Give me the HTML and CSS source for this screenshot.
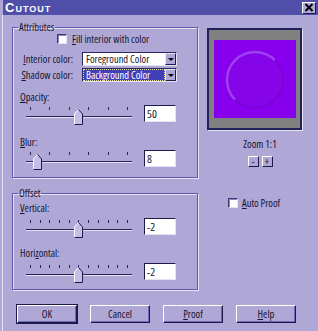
FILE: index.html
```html
<!DOCTYPE html>
<html lang="en">
<head>
    <meta charset="UTF-8">
    <title>Cutout</title>
    <link rel="stylesheet" href="styles.css">
</head>
<body>
    <div class="window">
        <div class="titlebar">
            <span class="title">Cutout</span>
            <div class="close">
                <svg width="10" height="9" viewBox="0 0 10 9"><path d="M1.5 1 L8.5 8 M8.5 1 L1.5 8" stroke="#000" stroke-width="2"/></svg>
            </div>
        </div>
        <div class="client">
            <div class="main">
                <div class="left">
                    <fieldset class="group">
                        <legend>Attributes</legend>
                        <div class="check-row fill-check">
                            <span class="checkbox"></span>
                            <span><u>F</u>ill interior with color</span>
                        </div>
                        <div class="combos">
                            <span class="combo-label"><u>I</u>nterior color:</span>
                            <div class="combo">
                                <span class="combo-text">Foreground Color</span>
                                <span class="combo-btn"><span class="arrow"></span></span>
                            </div>
                            <span class="combo-label"><u>S</u>hadow color:</span>
                            <div class="combo">
                                <span class="combo-text selected">Background Color</span>
                                <span class="combo-btn"><span class="arrow"></span></span>
                            </div>
                        </div>
                        <div class="field-label first"><u>O</u>pacity:</div>
                        <div class="slider-row">
                            <div class="slider">
                                <div class="ticks"><i></i><i></i><i></i><i></i><i></i><i></i></div>
                                <div class="track"></div>
                                <svg class="thumb" style="left: 48px" width="9" height="16" viewBox="0 0 9 16"><path d="M0.5 15.5 V5 L4.5 0.5 L8.5 5 V15.5 Z" fill="#c4bfe6"/><path d="M0.5 15.5 V5 L4.5 0.5" fill="none" stroke="#fff"/><path d="M4.5 0.5 L8.5 5 V15.5 H0.5" fill="none" stroke="#1c1a48"/></svg>
                            </div>
                            <div class="edit">50</div>
                        </div>
                        <div class="field-label"><u>B</u>lur:</div>
                        <div class="slider-row">
                            <div class="slider">
                                <div class="ticks"><i></i><i></i><i></i><i></i><i></i><i></i></div>
                                <div class="track"></div>
                                <svg class="thumb" style="left: 7px" width="9" height="16" viewBox="0 0 9 16"><path d="M0.5 15.5 V5 L4.5 0.5 L8.5 5 V15.5 Z" fill="#c4bfe6"/><path d="M0.5 15.5 V5 L4.5 0.5" fill="none" stroke="#fff"/><path d="M4.5 0.5 L8.5 5 V15.5 H0.5" fill="none" stroke="#1c1a48"/></svg>
                            </div>
                            <div class="edit">8</div>
                        </div>
                    </fieldset>
                    <fieldset class="group offset">
                        <legend>Offset</legend>
                        <div class="field-label first"><u>V</u>ertical:</div>
                        <div class="slider-row">
                            <div class="slider">
                                <div class="ticks"><i></i><i></i><i></i><i></i><i></i><i></i><i></i><i></i><i></i><i></i><i></i></div>
                                <div class="track"></div>
                                <svg class="thumb" style="left: 48px" width="9" height="16" viewBox="0 0 9 16"><path d="M0.5 15.5 V5 L4.5 0.5 L8.5 5 V15.5 Z" fill="#c4bfe6"/><path d="M0.5 15.5 V5 L4.5 0.5" fill="none" stroke="#fff"/><path d="M4.5 0.5 L8.5 5 V15.5 H0.5" fill="none" stroke="#1c1a48"/></svg>
                            </div>
                            <div class="edit">-2</div>
                        </div>
                        <div class="field-label">Hori<u>z</u>ontal:</div>
                        <div class="slider-row">
                            <div class="slider">
                                <div class="ticks"><i></i><i></i><i></i><i></i><i></i><i></i><i></i><i></i><i></i><i></i><i></i></div>
                                <div class="track"></div>
                                <svg class="thumb" style="left: 48px" width="9" height="16" viewBox="0 0 9 16"><path d="M0.5 15.5 V5 L4.5 0.5 L8.5 5 V15.5 Z" fill="#c4bfe6"/><path d="M0.5 15.5 V5 L4.5 0.5" fill="none" stroke="#fff"/><path d="M4.5 0.5 L8.5 5 V15.5 H0.5" fill="none" stroke="#1c1a48"/></svg>
                            </div>
                            <div class="edit">-2</div>
                        </div>
                    </fieldset>
                </div>
                <div class="right">
                    <div class="preview">
                        <div class="canvas">
                            <svg width="82" height="78" viewBox="0 0 82 78">
                                <circle cx="41" cy="40" r="28" fill="#8604e8"/>
                                <path d="M21.2 59.8 A28 28 0 0 1 60.8 20.2" fill="none" stroke="#9c40f0" stroke-width="2.5"/>
                                <path d="M60.8 20.2 A28 28 0 0 1 21.2 59.8" fill="none" stroke="#7c02d8" stroke-width="2"/>
                            </svg>
                        </div>
                    </div>
                    <div class="zoom-label">Zoom 1:1</div>
                    <div class="zoom-btns">
                        <span class="mini-btn">-</span>
                        <span class="mini-btn">+</span>
                    </div>
                    <div class="check-row auto-proof">
                        <span class="checkbox"></span>
                        <span><u>A</u>uto Proof</span>
                    </div>
                </div>
            </div>
            <div class="buttons">
                <span class="btn default">OK</span>
                <span class="btn">Cancel</span>
                <span class="btn"><u>P</u>roof</span>
                <span class="btn"><u>H</u>elp</span>
            </div>
        </div>
    </div>
</body>
</html>
```

FILE: styles.css
```css
* {
    box-sizing: border-box;
}
body {
    margin: 0;
    background: #afa8d7;
    font-family: "Open Sans", sans-serif;
    font-stretch: 75%;
    font-size: 10.5px;
    line-height: 12px;
    color: #16142e;
}
.window {
    width: 318px;
    height: 331px;
    padding-left: 2px;
    display: flex;
    flex-direction: column;
}
.titlebar {
    height: 15px;
    margin-left: 1px;
    background: #4f4ea8;
    display: flex;
    align-items: center;
    justify-content: space-between;
    padding: 0 2px 0 2px;
}
.title {
    font-family: "Liberation Sans", sans-serif;
    font-stretch: normal;
    font-weight: bold;
    font-size: 13px;
    font-variant: small-caps;
    letter-spacing: 1px;
    color: #fff;
}
.close {
    width: 14px;
    height: 12px;
    background: #afa8d7;
    border: 1px solid;
    border-color: #fff #1c1a48 #1c1a48 #fff;
    display: flex;
    align-items: center;
    justify-content: center;
}
.client {
    flex: 1;
    border-left: 1px solid #e6e2f6;
    display: flex;
    flex-direction: column;
}
.main {
    display: flex;
    padding: 6px 0 0 9px;
}
.left {
    width: 186px;
    display: flex;
    flex-direction: column;
    gap: 9px;
}
.group {
    margin: 0;
    padding: 0 0 6px 0;
    min-width: 0;
    border: 1px solid #5f5ab0;
    box-shadow: 1px 1px 0 #e6e2f6, inset 1px 1px 0 #e6e2f6;
}
.group legend {
    margin-left: 5px;
    padding: 0 1px;
    line-height: 12px;
}
.group.offset {
    padding-bottom: 5px;
}
.check-row {
    display: flex;
    align-items: center;
    gap: 5px;
    line-height: 12px;
}
.fill-check {
    margin-left: 44px;
}
.checkbox {
    width: 10px;
    height: 10px;
    background: #fff;
    border: 1px solid;
    border-color: #3a3870 #e6e2f6 #e6e2f6 #3a3870;
    box-shadow: inset 1px 1px 0 #8c86c4;
}
.combos {
    display: grid;
    grid-template-columns: 60px 95px;
    column-gap: 9px;
    row-gap: 2px;
    align-items: center;
    margin-top: 7px;
}
.combo-label {
    justify-self: end;
    white-space: nowrap;
}
.combo {
    height: 14px;
    display: flex;
    background: #fff;
    border: 1px solid;
    border-color: #2a2860 #e6e2f6 #e6e2f6 #2a2860;
}
.combo-text {
    flex: 1;
    line-height: 12px;
    padding-left: 3px;
    white-space: nowrap;
    overflow: hidden;
}
.combo-text.selected {
    background: #4240b8;
    color: #fff;
    outline: 1px dotted #e8e4a0;
    outline-offset: -1px;
}
.combo-btn {
    width: 11px;
    flex: none;
    background: #afa8d7;
    border: 1px solid;
    border-color: #e6e2f6 #1c1a48 #1c1a48 #e6e2f6;
    display: flex;
    align-items: center;
    justify-content: center;
}
.arrow {
    width: 0;
    height: 0;
    border-left: 3px solid transparent;
    border-right: 3px solid transparent;
    border-top: 3px solid #000;
}
.field-label {
    line-height: 12px;
    margin: 10px 0 0 7px;
}
.field-label.first {
    margin-top: 9px;
}
.offset .field-label {
    margin-top: 8px;
}
.offset .field-label.first {
    margin-top: 3px;
}
.slider-row {
    display: flex;
    align-items: flex-start;
    margin-top: 1px;
}
.offset .slider-row {
    margin-top: 3px;
}
.slider {
    position: relative;
    width: 106px;
    height: 22px;
    margin-left: 13px;
}
.ticks {
    display: flex;
    justify-content: space-between;
    padding: 0 4px;
    margin-top: 3px;
}
.ticks i {
    width: 1px;
    height: 3px;
    background: #2a2860;
}
.track {
    margin-top: 6px;
    height: 2px;
    border-top: 1px solid #262458;
    border-bottom: 1px solid #e6e2f6;
}
.thumb {
    position: absolute;
    top: 5px;
}
.edit {
    width: 32px;
    height: 17px;
    margin: 1px 0 0 12px;
    background: #fff;
    border: 1px solid;
    border-color: #1c1a48 #e6e2f6 #e6e2f6 #1c1a48;
    padding-left: 2px;
    font-size: 11.5px;
    line-height: 15px;
}
.right {
    width: 106px;
    margin-left: 9px;
    display: flex;
    flex-direction: column;
    align-items: center;
}
.preview {
    align-self: flex-start;
    margin-top: 7px;
    width: 95px;
    height: 102px;
    border: 2px solid #23215a;
    background: #808080;
    padding: 10px 4px 10px 5px;
    box-shadow: 1px 1px 0 #e6e2f6;
}
.canvas {
    width: 82px;
    height: 78px;
    background: #8700ee;
}
.canvas svg {
    display: block;
}
.zoom-label {
    margin-top: 8px;
    line-height: 12px;
}
.zoom-btns {
    display: flex;
    gap: 3px;
    margin-top: 6px;
}
.mini-btn {
    width: 11px;
    height: 11px;
    border: 1px solid;
    border-color: #fff #1c1a48 #1c1a48 #fff;
    font-size: 10px;
    line-height: 8px;
    text-align: center;
}
.auto-proof {
    align-self: flex-start;
    margin: 30px 0 0 21px;
    gap: 4px;
}
.buttons {
    display: flex;
    gap: 13px;
    margin-top: 15px;
    padding-left: 14px;
}
.btn {
    width: 60px;
    height: 18px;
    border: 1px solid;
    border-color: #fff #1c1a48 #1c1a48 #fff;
    box-shadow: inset -1px -1px 0 #6e68b8;
    text-align: center;
    line-height: 16px;
}
.btn.default {
    outline: 1px solid #1c1a48;
}
```
